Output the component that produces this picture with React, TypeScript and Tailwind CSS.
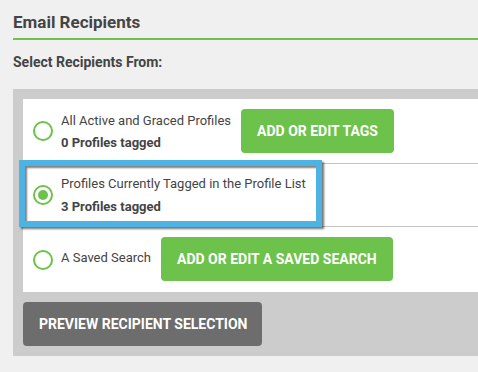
import React from "react";

function Radio({ checked }: { checked?: boolean }) {
  return (
    <div className="w-[20px] h-[20px] rounded-full border-2 border-[#6cc24a] flex items-center justify-center shrink-0 bg-white">
      {checked && <div className="w-[10px] h-[10px] rounded-full bg-[#6cc24a]" />}
    </div>
  );
}

function GreenButton({ children }: { children: React.ReactNode }) {
  return (
    <div className="h-[44px] px-[16px] rounded-[4px] bg-[#6cc24a] text-white font-bold text-[14px] flex items-center whitespace-nowrap">
      {children}
    </div>
  );
}

export default function App() {
  return (
    <div
      className="w-[478px] h-[372px] overflow-hidden bg-[#f0f0f0] text-[#444444]"
      style={{ fontFamily: "Roboto, 'Liberation Sans', sans-serif" }}
    >
      <div className="pl-[13px] pt-[11px]">
        <div className="text-[17px] font-bold leading-[22px] h-[27px]">Email Recipients</div>
        <div className="h-[2px] bg-[#6cc24a] w-[480px]" />
        <div className="text-[14px] font-bold leading-[20px] mt-[12px]">Select Recipients From:</div>
        <div className="mt-[17px] bg-[#cccccc] w-[500px] p-[10px] pb-[10px]">
          <div className="bg-white relative">
            <div className="h-[65px] border-b border-[#c4c4c4] flex items-center pl-[10px]">
              <Radio />
              <div className="ml-[8px] text-[13px] leading-[22px] mt-[1px]">
                <div>All Active and Graced Profiles</div>
                <div className="font-bold">0 Profiles tagged</div>
              </div>
              <div className="ml-[10px]">
                <GreenButton>ADD OR EDIT TAGS</GreenButton>
              </div>
            </div>
            <div className="h-[63px] border-b border-[#c4c4c4] flex items-center pl-[10px]">
              <Radio checked />
              <div className="ml-[8px] text-[13px] leading-[23px]">
                <div>Profiles Currently Tagged in the Profile List</div>
                <div className="font-bold">3 Profiles tagged</div>
              </div>
            </div>
            <div className="h-[65px] flex items-center pl-[10px]">
              <Radio />
              <div className="ml-[8px] text-[13px] leading-[22px] -mt-[3px]">A Saved Search</div>
              <div className="ml-[10px] -mt-[1px]">
                <GreenButton>ADD OR EDIT A SAVED SEARCH</GreenButton>
              </div>
            </div>
            <div className="absolute left-[-4px] top-[61px] w-[303px] h-[67px] border-[6px] border-[#4db3e2] shadow-[2px_2px_2px_rgba(0,0,0,0.55),inset_2px_2px_2px_rgba(0,0,0,0.5)]" />
          </div>
          <div className="mt-[10px] h-[44px] w-[239px] rounded-[4px] bg-[#6d6d6d] text-white font-bold text-[14px] flex items-center pl-[16px] whitespace-nowrap">
            PREVIEW RECIPIENT SELECTION
          </div>
        </div>
      </div>
    </div>
  );
}
